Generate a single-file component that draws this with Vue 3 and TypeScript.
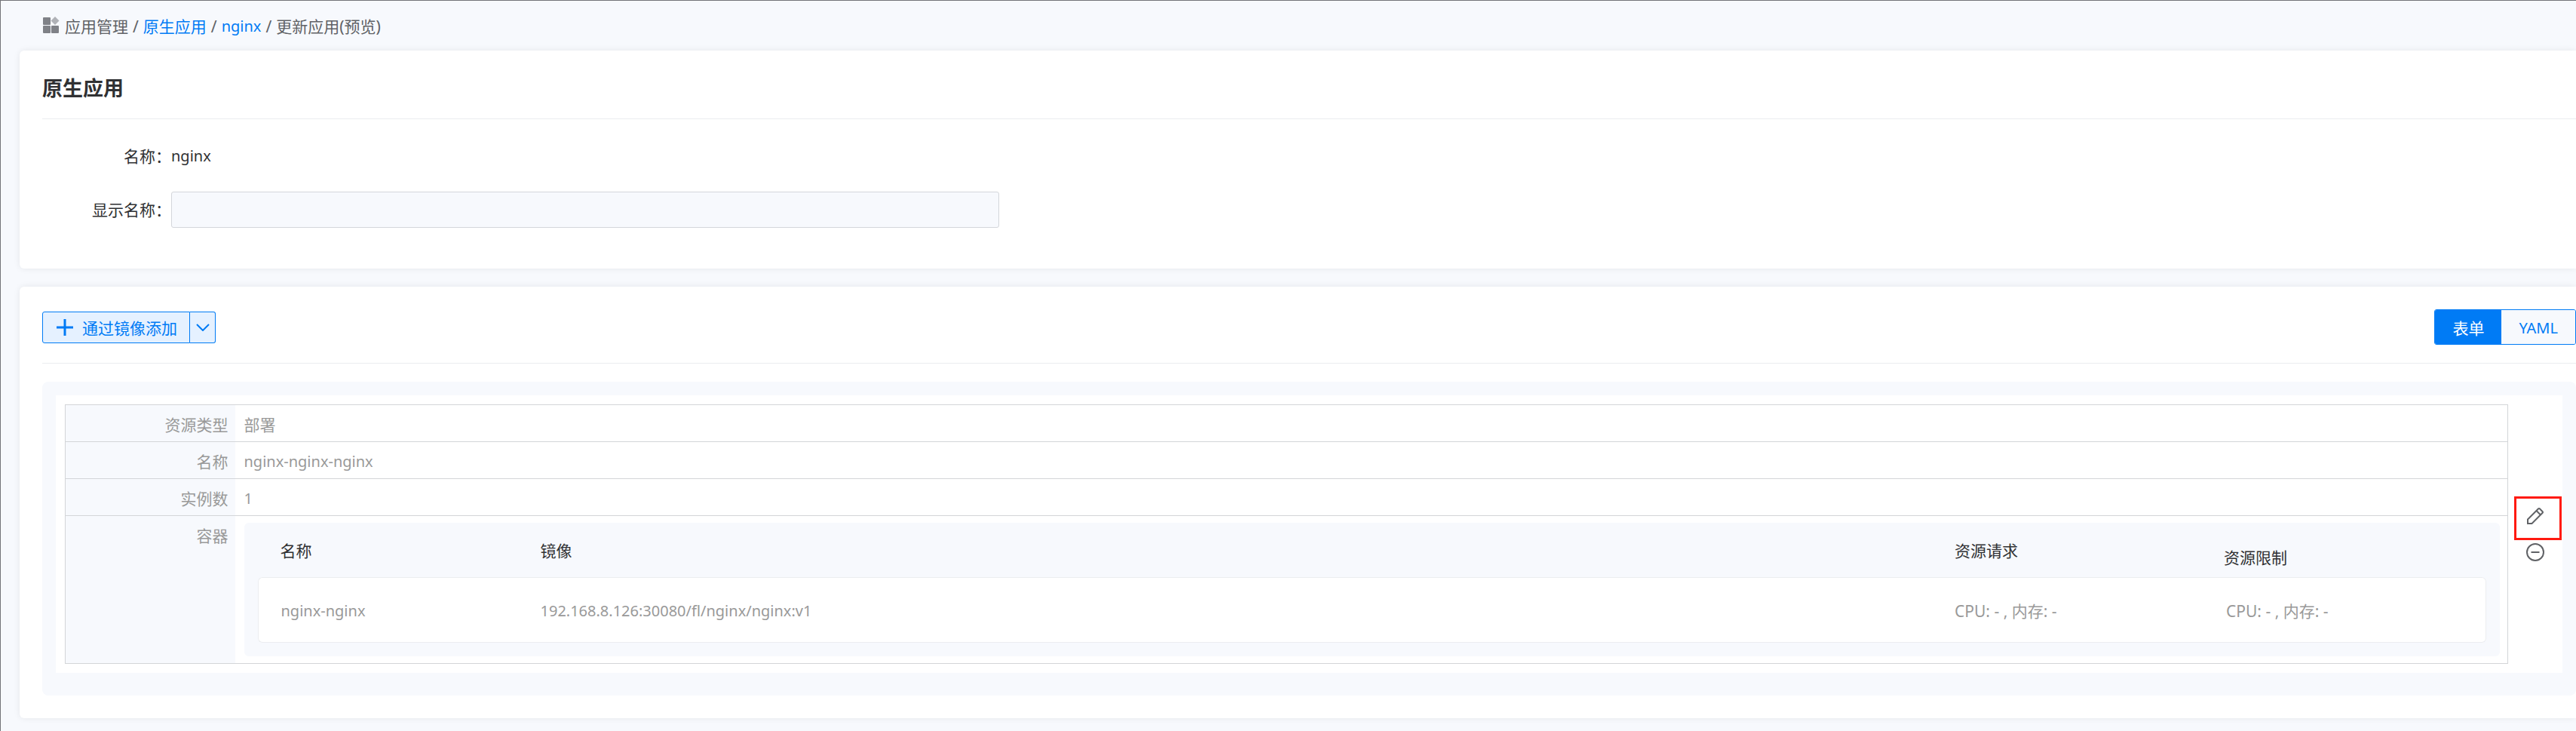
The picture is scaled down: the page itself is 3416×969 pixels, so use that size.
<script setup lang="ts">
import { ref } from 'vue'

interface Container {
  name: string
  image: string
  cpuRequest: string
  memoryRequest: string
  cpuLimit: string
  memoryLimit: string
}

const displayName = ref('')
const mode = ref<'form' | 'yaml'>('form')
const containers: Container[] = [
  {
    name: 'nginx-nginx',
    image: '192.168.8.126:30080/fl/nginx/nginx:v1',
    cpuRequest: '-',
    memoryRequest: '-',
    cpuLimit: '-',
    memoryLimit: '-',
  },
]
</script>

<template>
  <div class="page">
    <nav class="breadcrumb" aria-label="breadcrumb">
      <svg class="crumb-icon" viewBox="0 0 22 22" aria-hidden="true">
        <rect x="0" y="1" width="10" height="10" rx="1" fill="#7f8187" />
        <rect x="0" y="12" width="10" height="10" rx="1" fill="#7f8187" />
        <rect x="11" y="12" width="10" height="10" rx="1" fill="#7f8187" />
        <path d="M16 0 21.5 5.5 16 11 10.500 5.5Z" fill="#b0b2b7" />
      </svg>
      <span>应用管理</span>
      <span class="sep">/</span>
      <a href="#apps">原生应用</a>
      <span class="sep">/</span>
      <a href="#nginx" class="latin">nginx</a>
      <span class="sep">/</span>
      <span>更新应用(预览)</span>
    </nav>

    <main class="content">
      <section class="card basic">
        <h1 class="title">原生应用</h1>
        <div class="field">
          <span class="label">名称：</span>
          <span class="latin">nginx</span>
        </div>
        <div class="field">
          <label class="label" for="display-name">显示名称：</label>
          <input id="display-name" v-model="displayName" type="text" class="input" />
        </div>
      </section>

      <section class="card resources">
        <div class="toolbar">
          <div class="add-group">
            <button type="button" class="add">
              <svg class="plus" viewBox="0 0 22 22" aria-hidden="true">
                <path d="M11 0V22M0 11H22" />
              </svg>
              <span>通过镜像添加</span>
            </button>
            <button type="button" class="more" aria-label="更多">
              <svg class="chevron" viewBox="0 0 18 10" aria-hidden="true">
                <path d="M1 1 9 9 17 1" />
              </svg>
            </button>
          </div>
          <div class="modes">
            <button type="button" :class="['mode', { active: mode === 'form' }]" @click="mode = 'form'">表单</button>
            <button type="button" :class="['mode latin', { active: mode === 'yaml' }]" @click="mode = 'yaml'">YAML</button>
          </div>
        </div>

        <div class="panel">
          <div class="resource">
            <table class="detail">
              <tbody>
                <tr>
                  <th scope="row">资源类型</th>
                  <td>部署</td>
                </tr>
                <tr>
                  <th scope="row">名称</th>
                  <td class="latin">nginx-nginx-nginx</td>
                </tr>
                <tr>
                  <th scope="row">实例数</th>
                  <td class="latin">1</td>
                </tr>
                <tr>
                  <th scope="row">容器</th>
                  <td class="nested">
                    <div class="container-box">
                      <table class="containers">
                        <colgroup>
                          <col class="c-name" />
                          <col class="c-image" />
                          <col class="c-request" />
                          <col class="c-limit" />
                        </colgroup>
                        <thead>
                          <tr>
                            <th scope="col">名称</th>
                            <th scope="col">镜像</th>
                            <th scope="col">资源请求</th>
                            <th scope="col" class="low">资源限制</th>
                          </tr>
                        </thead>
                        <tbody>
                          <tr v-for="c in containers" :key="c.name">
                            <td class="latin">{{ c.name }}</td>
                            <td class="latin">{{ c.image }}</td>
                            <td>CPU: {{ c.cpuRequest }} , 内存: {{ c.memoryRequest }}</td>
                            <td>CPU: {{ c.cpuLimit }} , 内存: {{ c.memoryLimit }}</td>
                          </tr>
                        </tbody>
                      </table>
                    </div>
                  </td>
                </tr>
              </tbody>
            </table>
            <div class="actions">
              <button type="button" class="icon-btn marked" aria-label="编辑">
                <svg viewBox="0 0 24 24" aria-hidden="true">
                  <path d="M2 16.5 16.2 2.3Q17 1.5 17.8 2.3L21.7 6.2Q22.5 7 21.7 7.8L7.500 22H2ZM13.500 5 19 10.500" />
                </svg>
              </button>
              <button type="button" class="icon-btn" aria-label="移除">
                <svg viewBox="0 0 24 24" aria-hidden="true">
                  <circle cx="12" cy="12" r="11" />
                  <path d="M6.500 12H17.500" />
                </svg>
              </button>
            </div>
          </div>
        </div>
      </section>
    </main>
  </div>
</template>

<style>
body {
  margin: 0;
}
</style>

<style scoped>
* {
  box-sizing: border-box;
}

.page {
  min-height: 100vh;
  border-top: 1px solid #737479;
  border-left: 1px solid #737479;
  background: #f7f9fd;
  color: #303133;
  font-family: "Noto Sans", "Noto Sans CJK SC", sans-serif;
  font-size: 21px;
  line-height: 28px;
  overflow: hidden;
}

button,
input {
  font: inherit;
  margin: 0;
}

button {
  cursor: pointer;
}

.latin {
  font-size: 20px;
}

.breadcrumb {
  display: flex;
  align-items: center;
  height: 66px;
  padding: 2px 0 0 56px;
  color: #606266;
}

.crumb-icon {
  width: 22px;
  height: 22px;
  margin-right: 7px;
  margin-bottom: 4px;
}

.sep {
  margin: 0 6px;
}

a {
  color: #007bf5;
  text-decoration: none;
}

.content {
  display: flex;
  flex-direction: column;
  gap: 24px;
  padding: 0 0 17px 25px;
}

.card {
  padding-left: 30px;
  border-radius: 6px 0 0 6px;
  background: #fff;
  box-shadow: 0 0 8px rgba(0, 0, 0, 0.08);
}

.basic {
  padding-bottom: 54px;
}

.title {
  margin: 0 0 25px;
  padding: 32px 0 22px;
  border-bottom: 1px solid #ebedf0;
  font-size: 27px;
  line-height: 36px;
  font-weight: 700;
}

.field {
  display: flex;
  align-items: center;
  height: 48px;
}

.field + .field {
  margin-top: 23px;
}

.label {
  width: 171px;
  text-align: right;
  white-space: nowrap;
}

.input {
  width: 1098px;
  max-width: 80%;
  height: 48px;
  padding: 0 16px;
  border: 1px solid #d4d6db;
  border-radius: 3px;
  background: #f7f9fd;
  color: inherit;
}

.toolbar {
  display: flex;
  align-items: center;
  justify-content: space-between;
  height: 102px;
  padding-top: 6px;
  margin-bottom: 24px;
  border-bottom: 1px solid #ebedf0;
}

.add-group {
  display: flex;
  height: 42px;
  color: #007bf5;
}

.add,
.more {
  display: flex;
  align-items: center;
  justify-content: center;
  border: 1px solid #007bf5;
  background: #e5f1ff;
  color: inherit;
}

.add {
  gap: 12px;
  padding: 3px 16px 0 18px;
  border-radius: 3px 0 0 3px;
}

.more {
  width: 34px;
  padding: 0;
  border-left: 0;
  border-radius: 0 3px 3px 0;
}

.plus {
  width: 22px;
  height: 22px;
  margin-bottom: 3px;
  fill: none;
  stroke: currentColor;
  stroke-width: 3;
}

.chevron {
  width: 18px;
  height: 10px;
  fill: none;
  stroke: currentColor;
  stroke-width: 2;
}

.modes {
  display: flex;
  height: 47px;
  border: 1px solid #007bf5;
  border-radius: 3px;
  overflow: hidden;
}

.mode {
  padding: 3px 23px 0;
  border: 0;
  background: #f7f9fd;
  color: #007bf5;
}

.mode.active {
  background: #007bf5;
  color: #fff;
}

.resources {
  padding-bottom: 30px;
}

.panel {
  padding: 18px 18px 30px;
  border-radius: 8px;
  background: #f7f9fd;
}

.resource {
  display: flex;
  padding: 12px 0 12px 12px;
  background: #fff;
  color: #999;
}

table {
  width: 100%;
  table-layout: fixed;
}

th {
  font-weight: 400;
}

.detail {
  flex: 1;
  border: 1px solid #d3d5d8;
  border-collapse: collapse;
}

.detail > tbody > tr > th {
  width: 225px;
  padding: 12px 9px 8px 0;
  background: #f7f9fd;
  text-align: right;
  vertical-align: top;
}

.detail > tbody > tr > td {
  padding: 12px 12px 8px;
}

.detail > tbody > tr {
  border-bottom: 1px solid #d3d5d8;
}

.detail > tbody > tr > .nested {
  padding: 9px 10px 9px 12px;
}

.container-box {
  padding: 0 18px 18px;
  border-radius: 6px;
  background: #f7f9fd;
}

.containers {
  border-collapse: separate;
  border-spacing: 0;
}

.c-name {
  width: 345px;
}

.c-request {
  width: 360px;
}

.c-limit {
  width: 375px;
}

.containers th {
  height: 72px;
  padding: 2px 30px 0;
  color: #303133;
  text-align: left;
}

.containers .low {
  padding: 0 27px 12px;
  vertical-align: bottom;
}

.containers tbody tr {
  background: #fff;
}

.containers td {
  height: 87px;
  padding: 2px 30px 0;
  border: solid #ebedf0;
  border-width: 1px 0;
  white-space: nowrap;
}

.containers td:first-child {
  border-left-width: 1px;
  border-radius: 6px 0 0 6px;
}

.containers td:last-child {
  border-right-width: 1px;
  border-radius: 0 6px 6px 0;
}

.actions {
  display: flex;
  flex-direction: column;
  align-items: center;
  justify-content: center;
  gap: 24px;
  width: 72px;
}

.icon-btn {
  position: relative;
  width: 24px;
  height: 24px;
  padding: 0;
  border: 0;
  background: none;
  color: #606266;
}

.icon-btn svg {
  display: block;
  width: 24px;
  height: 24px;
  fill: none;
  stroke: currentColor;
  stroke-width: 2;
}

.marked::after {
  content: "";
  position: absolute;
  top: -14px;
  left: -16px;
  box-sizing: border-box;
  width: 63px;
  height: 58px;
  border: 3px solid #ff1a10;
}
</style>
